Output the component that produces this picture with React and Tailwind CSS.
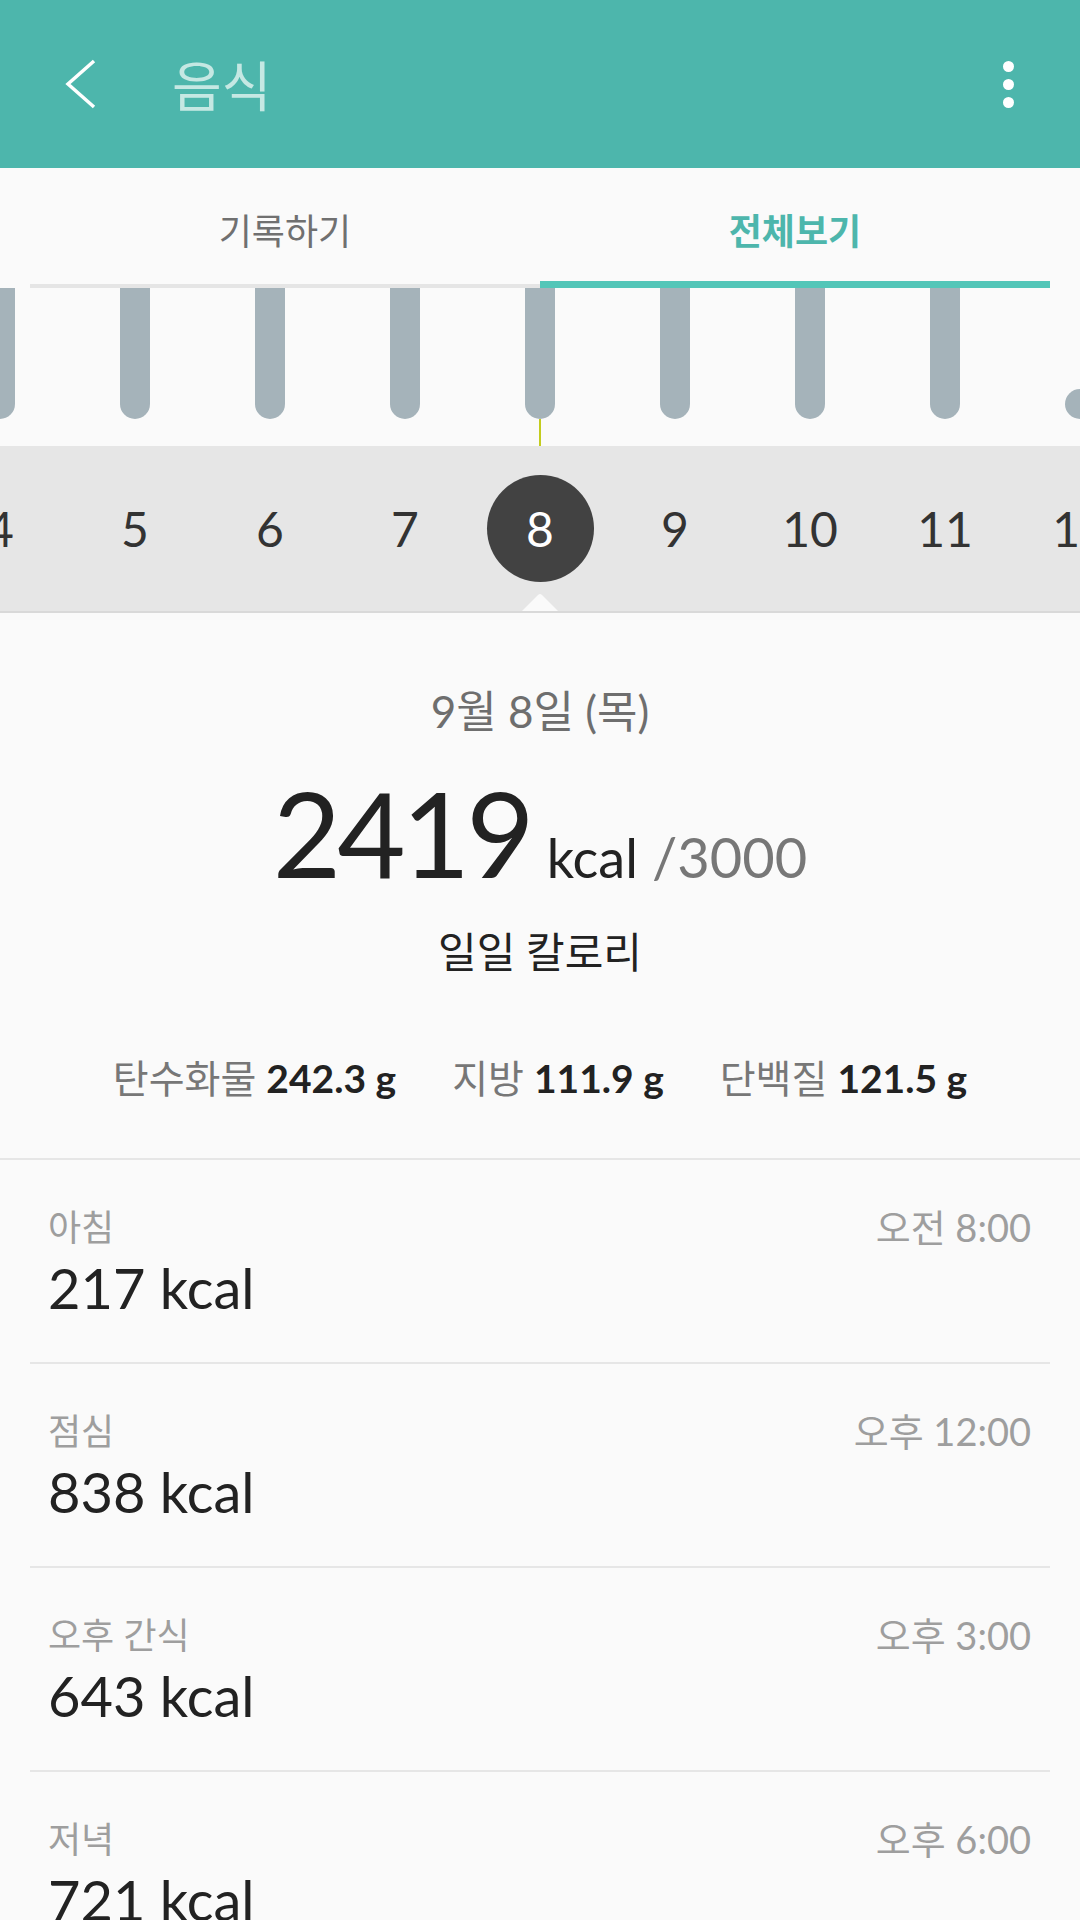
import React from 'react';

const font = "font-['Lato','Noto_Sans_CJK_KR',sans-serif]";

const slots = [4, 5, 6, 7, 8, 9, 10, 11, 12];

const meals = [
    { name: '아침', time: '오전 8:00', kcal: 217 },
    { name: '점심', time: '오후 12:00', kcal: 838 },
    { name: '오후 간식', time: '오후 3:00', kcal: 643 },
    { name: '저녁', time: '오후 6:00', kcal: 721 },
];

const macros = [
    { label: '탄수화물', value: '242.3 g' },
    { label: '지방', value: '111.9 g' },
    { label: '단백질', value: '121.5 g' },
];

const Header = () => (
    <div className="h-[168px] bg-[#4DB6AC] flex items-center">
        <svg width="40" height="60" viewBox="0 0 40 60" className="ml-[60px]">
            <path d="M34 7 L8 30 L34 53" fill="none" stroke="#fff" strokeWidth="3.5" />
        </svg>
        <div className="ml-[72px] text-[54px] leading-none text-[#C5E8E3] font-['Noto_Sans_CJK_KR',sans-serif]">음식</div>
        <div className="ml-auto mr-[66px] flex flex-col gap-[7px]">
            <span className="w-[11px] h-[11px] rounded-full bg-white" />
            <span className="w-[11px] h-[11px] rounded-full bg-white" />
            <span className="w-[11px] h-[11px] rounded-full bg-white" />
        </div>
    </div>
);

const Tabs = () => (
    <div className="h-[120px] flex px-[30px] items-end font-['Noto_Sans_CJK_KR',sans-serif]">
        <div className="flex-1 h-full flex flex-col">
            <div className="flex-1 flex items-center justify-center pt-[6px] text-[36px] text-[#707070]">기록하기</div>
            <div className="h-[4px] bg-[#E5E5E5]" />
        </div>
        <div className="flex-1 h-full flex flex-col">
            <div className="flex-1 flex items-center justify-center pt-[9px] text-[36px] font-bold text-[#4DB6AC]">전체보기</div>
            <div className="h-[7px] bg-[#53C6B8]" />
        </div>
    </div>
);

const Bars = () => (
    <div className="h-[158px] overflow-hidden">
        <div className="flex ml-[-67.5px]">
            {slots.map((d, i) => (
                <div key={d} className="w-[135px] shrink-0 flex flex-col items-center">
                    {i === slots.length - 1 ? (
                        <div className="w-[30px] h-[30px] rounded-full bg-[#A5B3BA] mt-[101px]" />
                    ) : (
                        <div className="w-[30px] h-[131px] rounded-b-full bg-[#A5B3BA]" />
                    )}
                    {d === 8 && <div className="w-[2px] h-[27px] bg-[#C3CC1E]" />}
                </div>
            ))}
        </div>
    </div>
);

const Dates = () => (
    <div className="relative h-[167px] bg-[#E6E6E6] border-b-2 border-[#D9D9D9] overflow-hidden">
        <div className="flex ml-[-67.5px] h-full items-center">
            {slots.map(d => (
                <div key={d} className="w-[135px] shrink-0 flex justify-center">
                    {d === 8 ? (
                        <div className="w-[107px] h-[107px] rounded-full bg-[#424242] flex items-center justify-center text-white text-[48px] leading-none">8</div>
                    ) : (
                        <div className="text-[48px] leading-none text-[#333]">{d}</div>
                    )}
                </div>
            ))}
        </div>
        <svg width="44" height="20" viewBox="0 0 44 20" className="absolute left-[518px] bottom-[-2px]">
            <path d="M2 20 L20 2 Q22 0 24 2 L42 20 Z" fill="#FAFAFA" />
        </svg>
    </div>
);

const Summary = () => (
    <div className="flex flex-col items-center border-b-2 border-[#E6E6E6]">
        <div className="mt-[73px] h-[50px] flex items-center text-[44px] text-[#6E6E6E]">9월 8일 (목)</div>
        <div className="mt-[38px] flex items-baseline leading-none">
            <span className="text-[118px] tracking-[-4px] text-[#222]">2419</span>
            <span className="ml-[16px] text-[54px] text-[#222]">kcal</span>
            <span className="ml-[14px] text-[56px] text-[#777]">/3000</span>
        </div>
        <div className="mt-[35px] h-[50px] flex items-center text-[42px] text-[#222]">일일 칼로리</div>
        <div className="mt-[76px] mb-[55px] h-[50px] flex items-center gap-[56px] text-[39px]">
            {macros.map(m => (
                <div key={m.label} className="flex items-baseline gap-[10px]">
                    <span className="text-[#777]">{m.label}</span>
                    <span className="font-bold text-[#222]">{m.value}</span>
                </div>
            ))}
        </div>
    </div>
);

const MealRow = ({ meal, last }) => (
    <div>
        <div className="pl-[48px] pr-[49px] pt-[44px] pb-[44px]">
            <div className="h-[46px] flex items-center justify-between text-[#9E9E9E]">
                <span className="text-[36px]">{meal.name}</span>
                <span className="text-[38px]">{meal.time}</span>
            </div>
            <div className="mt-[10px] h-[58px] text-[56px] leading-none text-[#222]">{meal.kcal} kcal</div>
        </div>
        {!last && <div className="mx-[30px] h-[2px] bg-[#E6E6E6]" />}
    </div>
);

export default function App() {
    return (
        <div className={`w-[1080px] h-[1920px] overflow-hidden bg-[#FAFAFA] ${font}`}>
            <Header />
            <Tabs />
            <Bars />
            <Dates />
            <Summary />
            <div>
                {meals.map((m, i) => (
                    <MealRow key={m.name} meal={m} last={i === meals.length - 1} />
                ))}
            </div>
        </div>
    );
}
